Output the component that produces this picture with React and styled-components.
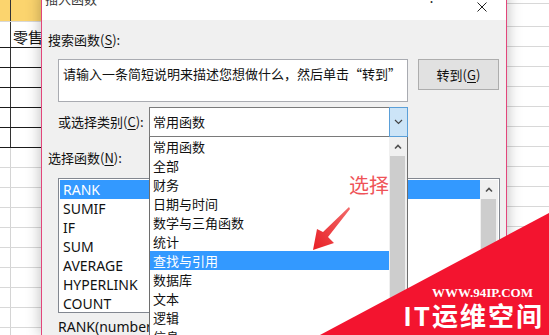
import styled, { createGlobalStyle } from "styled-components";

const GlobalStyle = createGlobalStyle`
  html, body {
    margin: 0;
    padding: 0;
    background: #ffffff;
    overflow: hidden;
  }
  body {
    font-family: "Noto Sans", "Noto Sans CJK SC", sans-serif;
  }
`;

const CJK = `"Noto Sans CJK SC", "Noto Sans", sans-serif`;
const LATIN = `"Noto Sans", "Noto Sans CJK SC", sans-serif`;

const Page = styled.div`
  position: relative;
  display: flex;
  width: 549px;
  height: 335px;
  overflow: hidden;
  background: #ffffff;
`;

/* ---------- spreadsheet behind the dialog ---------- */

const Sheet = styled.div`
  display: flex;
  flex-direction: column;
  width: ${(p) => p.$width || "auto"};
  flex: ${(p) => (p.$grow ? 1 : "none")};
  overflow: hidden;
  background: #ffffff;
`;

const SheetRow = styled.div`
  display: flex;
  flex: none;
  height: ${(p) => p.$h}px;
  box-sizing: border-box;
  border-bottom: 1px solid ${(p) => (p.$dark ? "#1a1a1a" : "#d8d8d8")};
  background: ${(p) => (p.$yellow ? "#fbd46e" : "transparent")};
`;

const IndexCell = styled.div`
  width: 11px;
  flex: none;
  box-sizing: border-box;
  border-right: 1px solid ${(p) => (p.$dark ? "#333333" : "#d4d4d4")};
`;

const DataCell = styled.div`
  flex: 1;
  padding: 6px 0 0 2px;
  font-family: ${CJK};
  font-size: 15px;
  line-height: 18px;
  color: #111111;
  white-space: nowrap;
`;

/* ---------- dialog ---------- */

const Dialog = styled.div`
  position: relative;
  z-index: 1;
  display: flex;
  flex-direction: column;
  width: 466px;
  flex: none;
  margin-top: -10px;
  box-sizing: border-box;
  border-left: 1px solid #e2467b;
  border-right: 1px solid #e2467b;
  background: #f0f0f0;
  box-shadow: 0 0 14px rgba(0, 0, 0, 0.28);
`;

const TitleBar = styled.div`
  display: flex;
  justify-content: space-between;
  height: 30px;
  background: #ffffff;
`;

const Title = styled.div`
  padding-left: 3px;
  font-family: ${CJK};
  font-size: 13px;
  line-height: 18px;
  color: #3a3a3a;
`;

const TitleButtons = styled.div`
  display: flex;
  gap: 4px;
  padding-right: 1px;
`;

const TitleButton = styled.div`
  display: flex;
  align-items: ${(p) => (p.$close ? "center" : "flex-start")};
  justify-content: center;
  width: 46px;
  height: 30px;
  box-sizing: border-box;
  padding-top: ${(p) => (p.$close ? "4px" : "0")};
  font-family: ${LATIN};
  font-size: 14px;
  line-height: 16px;
  color: #222222;
`;

const Body = styled.div`
  display: flex;
  flex-direction: column;
  flex: 1;
  padding: 12px 6px 0 6px;
  font-family: ${CJK};
  font-size: 13px;
  color: #111111;
`;

const Label = styled.div`
  line-height: 16px;
  margin-top: ${(p) => p.$top || 0}px;
  width: ${(p) => p.$width || "auto"};
  flex: none;
  white-space: nowrap;

  u {
    text-underline-offset: 2px;
  }
`;

const SearchRow = styled.div`
  display: flex;
  align-items: flex-start;
  gap: 10px;
  margin-top: 11px;
  padding-left: 10px;
`;

const SearchBox = styled.div`
  width: 350px;
  height: 43px;
  box-sizing: border-box;
  padding: 6px 4px;
  border: 1px solid #a9abb1;
  background: #ffffff;
  line-height: 16px;
  white-space: nowrap;
  overflow: hidden;
`;

const GoButton = styled.div`
  display: flex;
  align-items: center;
  justify-content: center;
  width: 81px;
  height: 31px;
  box-sizing: border-box;
  border: 1px solid #adadad;
  background: #e1e1e1;

  u {
    text-underline-offset: 2px;
  }
`;

const CategoryRow = styled.div`
  display: flex;
  align-items: center;
  height: 30px;
  margin-top: 5px;
  padding-left: 10px;
`;

const Select = styled.div`
  position: relative;
  display: flex;
  width: 259px;
  height: 30px;
`;

const SelectValue = styled.div`
  flex: 1;
  box-sizing: border-box;
  padding-left: 3px;
  border: 1px solid #7a7a7a;
  border-right: none;
  background: #ffffff;
  line-height: 28px;
`;

const SelectArrow = styled.div`
  display: flex;
  align-items: center;
  justify-content: center;
  width: 19px;
  box-sizing: border-box;
  border: 1px solid #5a9fd8;
  background: #cce4f7;
`;

const DropList = styled.div`
  position: absolute;
  z-index: 2;
  top: 100%;
  left: 0;
  display: flex;
  width: 259px;
  height: 230px;
  box-sizing: border-box;
  border: 1px solid #6e6e6e;
  border-top: none;
  background: #ffffff;
`;

const DropItems = styled.div`
  display: flex;
  flex-direction: column;
  flex: 1;
`;

const DropItem = styled.div`
  height: 19px;
  padding-left: 3px;
  line-height: 19px;
  white-space: nowrap;
  background: ${(p) => (p.$selected ? "#3399ff" : "transparent")};
  color: ${(p) => (p.$selected ? "#ffffff" : "#111111")};
`;

const ScrollBar = styled.div`
  display: flex;
  flex-direction: column;
  width: 18px;
  flex: none;
  background: #f0f0f0;
`;

const ScrollArrow = styled.div`
  display: flex;
  align-items: center;
  justify-content: center;
  height: ${(p) => p.$h}px;
`;

const ScrollThumb = styled.div`
  height: ${(p) => p.$h}px;
  margin: 0 2px 0 1px;
  background: #cdcdcd;
`;

const FunctionList = styled.div`
  display: flex;
  width: 442px;
  height: 135px;
  box-sizing: border-box;
  margin: 12px 0 0 10px;
  padding: 1px;
  border: 1px solid #828790;
  background: #ffffff;
`;

const FunctionItems = styled.div`
  display: flex;
  flex-direction: column;
  flex: 1;
`;

const FunctionItem = styled.div`
  height: 19px;
  padding-left: 3px;
  font-family: ${LATIN};
  font-size: 14px;
  line-height: 19px;
  background: ${(p) => (p.$selected ? "#3399ff" : "transparent")};
  color: ${(p) => (p.$selected ? "#ffffff" : "#111111")};
`;

const Signature = styled.div`
  margin: 6px 0 0 10px;
  font-family: ${LATIN};
  font-size: 14px;
  line-height: 16px;
  white-space: nowrap;
`;

/* ---------- overlays: annotation + watermark ---------- */

const Annotation = styled.div`
  position: absolute;
  z-index: 5;
  left: 349px;
  top: 173px;
  font-family: ${CJK};
  font-size: 20px;
  line-height: 24px;
  color: #ef5358;
`;

const PointerArrow = styled.svg`
  position: absolute;
  z-index: 5;
  left: 300px;
  top: 200px;
`;

const Watermark = styled.div`
  position: absolute;
  z-index: 6;
  right: 0;
  bottom: 0;
  display: flex;
  flex-direction: column;
  align-items: flex-end;
  justify-content: flex-end;
  width: 229px;
  height: 122px;
  box-sizing: border-box;
  padding: 0 5px 5px 0;
  background: #f3142f;
  clip-path: polygon(100% 0, 100% 100%, 0 100%);
`;

const WatermarkUrl = styled.div`
  margin-right: 11px;
  font-family: "Liberation Serif", serif;
  font-weight: 700;
  font-size: 13px;
  line-height: 15px;
  color: #ffffff;
`;

const WatermarkName = styled.div`
  font-family: ${CJK};
  font-weight: 700;
  font-size: 26px;
  line-height: 30px;
  letter-spacing: 2px;
  color: #ffffff;
`;

const ChevronDown = () => (
  <svg width="9" height="6" viewBox="0 0 9 6">
    <path d="M1 1 L4.5 4.5 L8 1" fill="none" stroke="#444" strokeWidth="1.2" />
  </svg>
);

const ChevronUp = () => (
  <svg width="8" height="6" viewBox="0 0 8 6">
    <path d="M1 4.5 L4 1.5 L7 4.5" fill="none" stroke="#505050" strokeWidth="1.6" />
  </svg>
);

const CloseIcon = () => (
  <svg width="10" height="10" viewBox="0 0 10 10">
    <path d="M0.5 0.5 L9.5 9.5 M9.5 0.5 L0.5 9.5" stroke="#222" strokeWidth="1" />
  </svg>
);

const leftRows = [
  { h: 22, yellow: true, dark: false, text: "" },
  { h: 26, dark: true, text: "零售" },
  { h: 20, dark: true },
  { h: 20, dark: true },
  { h: 20, dark: true },
  { h: 20, dark: true },
  { h: 20, dark: true },
  ...Array.from({ length: 10 }, () => ({ h: 20, dark: false })),
];

const rightRows = [4, 23, ...Array.from({ length: 16 }, () => 20)];

const categories = [
  "常用函数",
  "全部",
  "财务",
  "日期与时间",
  "数学与三角函数",
  "统计",
  "查找与引用",
  "数据库",
  "文本",
  "逻辑",
  "信息",
  "工程",
];

const functions = ["RANK", "SUMIF", "IF", "SUM", "AVERAGE", "HYPERLINK", "COUNT"];

const App = () => {
  return (
    <>
      <GlobalStyle />
      <Page>
        <Sheet $width="41px">
          {leftRows.map((row, i) => (
            <SheetRow key={i} $h={row.h} $dark={row.dark} $yellow={row.yellow}>
              <IndexCell $dark={row.dark || row.yellow} />
              <DataCell>{row.text}</DataCell>
            </SheetRow>
          ))}
        </Sheet>

        <Dialog>
          <TitleBar>
            <Title>插入函数</Title>
            <TitleButtons>
              <TitleButton>?</TitleButton>
              <TitleButton $close>
                <CloseIcon />
              </TitleButton>
            </TitleButtons>
          </TitleBar>

          <Body>
            <Label>
              搜索函数(<u>S</u>):
            </Label>
            <SearchRow>
              <SearchBox>请输入一条简短说明来描述您想做什么，然后单击“转到”</SearchBox>
              <GoButton>
                转到(<u>G</u>)
              </GoButton>
            </SearchRow>

            <CategoryRow>
              <Label $width="91px">
                或选择类别(<u>C</u>):
              </Label>
              <Select>
                <SelectValue>常用函数</SelectValue>
                <SelectArrow>
                  <ChevronDown />
                </SelectArrow>
                <DropList>
                  <DropItems>
                    {categories.map((c) => (
                      <DropItem key={c} $selected={c === "查找与引用"}>
                        {c}
                      </DropItem>
                    ))}
                  </DropItems>
                  <ScrollBar>
                    <ScrollArrow $h={20}>
                      <ChevronUp />
                    </ScrollArrow>
                    <ScrollThumb $h={220} />
                  </ScrollBar>
                </DropList>
              </Select>
            </CategoryRow>

            <Label $top={13}>
              选择函数(<u>N</u>):
            </Label>
            <FunctionList>
              <FunctionItems>
                {functions.map((f) => (
                  <FunctionItem key={f} $selected={f === "RANK"}>
                    {f}
                  </FunctionItem>
                ))}
              </FunctionItems>
              <ScrollBar>
                <ScrollArrow $h={19}>
                  <ChevronUp />
                </ScrollArrow>
                <ScrollThumb $h={70} />
              </ScrollBar>
            </FunctionList>
            <Signature>RANK(number,ref,order)</Signature>
          </Body>
        </Dialog>

        <Sheet $grow>
          {rightRows.map((h, i) => (
            <SheetRow key={i} $h={h} />
          ))}
        </Sheet>

        <Annotation>选择</Annotation>
        <PointerArrow width="60" height="60" viewBox="0 0 60 60">
          <defs>
            <linearGradient id="arrowFill" x1="1" y1="0" x2="0" y2="1">
              <stop offset="0" stopColor="#f26a6a" />
              <stop offset="1" stopColor="#e81f25" />
            </linearGradient>
          </defs>
          <polygon
            points="49,7 50,9 28,37 34,43 13,50 17,29 23,32"
            fill="url(#arrowFill)"
          />
        </PointerArrow>

        <Watermark>
          <WatermarkUrl>WWW.94IP.COM</WatermarkUrl>
          <WatermarkName>IT运维空间</WatermarkName>
        </Watermark>
      </Page>
    </>
  );
};

export default App;
